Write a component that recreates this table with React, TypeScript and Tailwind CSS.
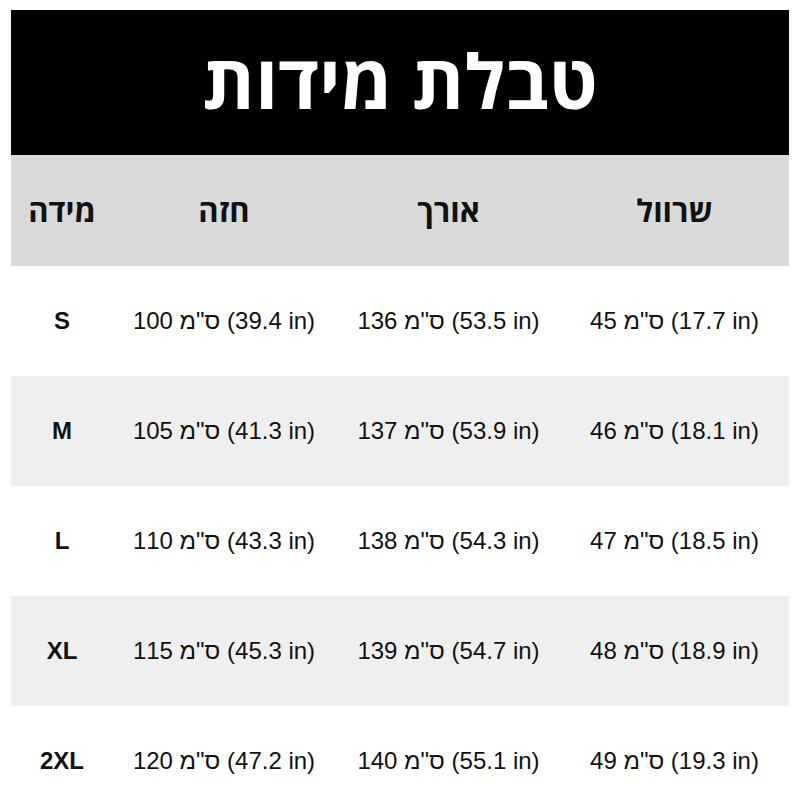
const rows = [
  { size: "S", chest: [100, "39.4"], length: [136, "53.5"], sleeve: [45, "17.7"] },
  { size: "M", chest: [105, "41.3"], length: [137, "53.9"], sleeve: [46, "18.1"] },
  { size: "L", chest: [110, "43.3"], length: [138, "54.3"], sleeve: [47, "18.5"] },
  { size: "XL", chest: [115, "45.3"], length: [139, "54.7"], sleeve: [48, "18.9"] },
  { size: "2XL", chest: [120, "47.2"], length: [140, "55.1"], sleeve: [49, "19.3"] },
];

const cols = "grid grid-cols-[102px_222px_227px_225px]";
const hebrew = "font-['Open_Sans','Noto_Sans_Hebrew','DejaVu_Sans',sans-serif]";

function Measure({ v }: { v: (string | number)[] }) {
  // keep the cm unit isolated so the cell reads left-to-right
  return (
    <div>
      {v[0]} <bdi dir="rtl">ס"מ</bdi> ({v[1]} in)
    </div>
  );
}

export default function App() {
  return (
    <div className="w-[800px] h-[800px] overflow-hidden bg-white pt-[10px] px-[11px]">
      <div className="h-[145px] bg-black flex items-center justify-center">
        <h1 dir="rtl" className={`${hebrew} text-white font-bold text-[75px] leading-none pb-1`}>
          טבלת מידות
        </h1>
      </div>

      {/* header row */}
      <div className={`${cols} ${hebrew} h-[111px] bg-[#d9d9d9] items-center text-center font-bold text-[31px] text-[#111]`}>
        <div dir="rtl">מידה</div>
        <div dir="rtl">חזה</div>
        <div dir="rtl">אורך</div>
        <div dir="rtl">שרוול</div>
      </div>

      {rows.map((r, i) => (
        <div
          key={r.size}
          className={`${cols} h-[110px] items-center text-center text-[24px] text-[#111] font-['Liberation_Sans',Arial,sans-serif] ${i % 2 === 1 ? "bg-[#efefef]" : "bg-white"}`}
        >
          <div className="font-bold">{r.size}</div>
          <Measure v={r.chest} />
          <Measure v={r.length} />
          <Measure v={r.sleeve} />
        </div>
      ))}
    </div>
  );
}
